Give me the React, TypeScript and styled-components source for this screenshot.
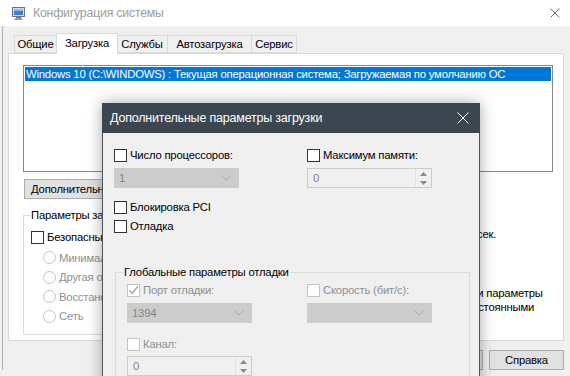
import React from 'react';
import styled, { createGlobalStyle } from 'styled-components';

const GlobalStyle = createGlobalStyle`
  html, body {
    margin: 0;
    padding: 0;
  }
  body {
    background: #f0f0f0;
    font-family: "Liberation Sans", "Noto Sans", sans-serif;
    font-size: 11.3px;
    letter-spacing: -0.2px;
    color: #000;
  }
`;

const Screen = styled.div`
  position: relative;
  width: 570px;
  height: 376px;
  overflow: hidden;
  background: #f0f0f0;
`;

/* ---------- main window ---------- */

const TitleBar = styled.div`
  height: 26px;
  background: #fff;
  display: flex;
  align-items: center;
  padding-left: 12px;
`;

const TitleText = styled.span`
  margin-left: 7px;
  font-size: 12.3px;
  color: #9d9d9d;
  flex: 1;
`;

const CloseBox = styled.div`
  width: 46px;
  height: 26px;
  display: flex;
  align-items: center;
  justify-content: center;
  margin-right: -8px;
`;

const Body = styled.div`
  margin-left: 2px;
  border-left: 1px solid #b0b0b0;
  padding: 7px 6px 0 5px;
`;

const TabStrip = styled.div`
  display: flex;
  align-items: flex-end;
  height: 20px;
  padding-left: 6px;
  position: relative;
  z-index: 1;
`;

const Tab = styled.div<{ $active?: boolean; $width: number }>`
  width: ${(p) => p.$width}px;
  height: ${(p) => (p.$active ? 21 : 18)}px;
  line-height: ${(p) => (p.$active ? 19 : 17)}px;
  text-align: center;
  margin-right: ${(p) => (p.$active ? -1 : 0)}px;
  margin-bottom: ${(p) => (p.$active ? -1 : 0)}px;
  background: ${(p) => (p.$active ? '#fff' : '#f0f0f0')};
  border: 1px solid #d9d9d9;
  border-bottom: ${(p) => (p.$active ? 'none' : '1px solid #d9d9d9')};
  box-sizing: border-box;
  white-space: nowrap;
  position: relative;
  z-index: ${(p) => (p.$active ? 2 : 1)};
  & + & {
    margin-left: -1px;
  }
`;

const Panel = styled.div`
  height: 288px;
  box-sizing: border-box;
  background: #fff;
  border: 1px solid #d9d9d9;
  padding: 11px 10px 0 14px;
`;

const ListBox = styled.div`
  height: 107px;
  box-sizing: border-box;
  border: 1px solid #828790;
  padding: 1px;
`;

const ListItem = styled.div<{ $selected?: boolean }>`
  height: 14px;
  line-height: 14px;
  padding-left: 1px;
  white-space: nowrap;
  background: ${(p) => (p.$selected ? '#0078d7' : 'transparent')};
  color: ${(p) => (p.$selected ? '#fff' : '#000')};
`;

const PushButton = styled.div<{ $width?: number }>`
  height: 20px;
  width: ${(p) => (p.$width ? `${p.$width}px` : 'auto')};
  padding: 0 6px;
  box-sizing: border-box;
  background: #e1e1e1;
  border: 1px solid #adadad;
  line-height: 18px;
  text-align: center;
  white-space: nowrap;
  overflow: hidden;
`;

const AdvancedRow = styled.div`
  display: flex;
  margin-top: 7px;
  margin-left: 1px;
`;

const BootArea = styled.div`
  display: flex;
  margin-top: 9px;
`;

const Group = styled.fieldset<{ $width: number }>`
  width: ${(p) => p.$width}px;
  box-sizing: border-box;
  margin: 0;
  padding: 0 8px 8px 7px;
  border: 1px solid #dcdcdc;
  min-width: 0;
`;

const Legend = styled.legend`
  padding: 0 1px;
  margin-left: -1px;
  line-height: 14px;
  white-space: nowrap;
`;

const BootColumns = styled.div`
  display: flex;
  gap: 20px;
  padding-top: 8px;
`;

const Column = styled.div`
  display: flex;
  flex-direction: column;
`;

const OptionRow = styled.label<{ $indent?: number; $height?: number; $disabled?: boolean }>`
  display: flex;
  align-items: center;
  gap: 3px;
  height: ${(p) => p.$height ?? 14}px;
  padding-left: ${(p) => p.$indent ?? 0}px;
  white-space: nowrap;
  color: ${(p) => (p.$disabled ? '#8f8f8f' : '#000')};
`;

const Box = styled.span<{ $disabled?: boolean }>`
  width: 13px;
  height: 13px;
  box-sizing: border-box;
  flex: none;
  background: #fff;
  border: 1px solid ${(p) => (p.$disabled ? '#c4c4c4' : '#333')};
  display: flex;
  align-items: center;
  justify-content: center;
`;

const Radio = styled.span`
  width: 13px;
  height: 13px;
  box-sizing: border-box;
  flex: none;
  border-radius: 50%;
  background: #fff;
  border: 1px solid #c4c4c4;
`;

const SideColumn = styled.div`
  display: flex;
  flex-direction: column;
  padding-left: 12px;
  line-height: 14px;
`;

const TimeoutRow = styled.div`
  display: flex;
  align-items: center;
  gap: 4px;
  margin-top: 2px;
`;

const TextBox = styled.div<{ $width: number }>`
  width: ${(p) => p.$width}px;
  height: 20px;
  box-sizing: border-box;
  border: 1px solid #7a7a7a;
  background: #fff;
  padding-left: 4px;
  line-height: 18px;
`;

const PersistRow = styled.label`
  display: flex;
  align-items: flex-start;
  gap: 3px;
  margin-top: 42px;
  line-height: 14px;
`;

const BottomButtons = styled.div`
  display: flex;
  justify-content: flex-end;
  gap: 6px;
  padding: 9px 0 0;
`;

/* ---------- dialog ---------- */

const Dialog = styled.div`
  position: absolute;
  left: 102px;
  top: 103px;
  width: 378px;
  height: 300px;
  box-sizing: border-box;
  background: #f0f0f0;
  border: 1px solid #4a545e;
  box-shadow: 0 0 14px rgba(0, 0, 0, 0.35);
`;

const DialogTitle = styled.div`
  height: 30px;
  background: #3c4650;
  color: #fff;
  font-size: 12.5px;
  display: flex;
  align-items: center;
  padding-left: 8px;
  margin: -1px -1px 0 -1px;
`;

const DialogTitleText = styled.span`
  flex: 1;
`;

const DialogClose = styled.div`
  width: 32px;
  display: flex;
  justify-content: center;
  margin-right: 1px;
`;

const DialogBody = styled.div`
  padding: 15px 0 0 11px;
`;

const TwoCols = styled.div<{ $col: number }>`
  display: grid;
  grid-template-columns: ${(p) => p.$col}px 125px;
  row-gap: 6px;
`;

const Combo = styled.div`
  width: 125px;
  height: 20px;
  box-sizing: border-box;
  background: #cccccc;
  border: 1px solid #cccccc;
  display: flex;
  align-items: center;
  padding: 0 7px 0 4px;
  color: #858585;
`;

const ComboValue = styled.span`
  flex: 1;
`;

const Spin = styled.div`
  width: 125px;
  height: 20px;
  box-sizing: border-box;
  border: 1px solid #cccccc;
  background: #f0f0f0;
  display: flex;
  color: #858585;
`;

const SpinValue = styled.span`
  flex: 1;
  padding-left: 5px;
  line-height: 18px;
`;

const SpinButtons = styled.div`
  width: 15px;
  border-left: 1px solid #e2e2e2;
  display: flex;
  flex-direction: column;
  align-items: center;
  justify-content: space-around;
`;

const Stack = styled.div<{ $top: number; $gap: number }>`
  display: flex;
  flex-direction: column;
  gap: ${(p) => p.$gap}px;
  margin-top: ${(p) => p.$top}px;
`;

const DebugGroup = styled.fieldset`
  width: 355px;
  box-sizing: border-box;
  margin: 32px 0 0 1px;
  padding: 4px 0 0 11px;
  border: 1px solid #dcdcdc;
  border-bottom: none;
  min-width: 0;
  height: 140px;
`;

const DebugLegend = styled.legend`
  padding: 0 1px;
  margin-left: -4px;
  line-height: 14px;
`;

/* ---------- icons ---------- */

const AppIcon = () => (
  <svg width="14" height="14" viewBox="0 0 14 14">
    <rect x="0.5" y="1.5" width="12" height="9" fill="#d8dde3" stroke="#6b7480" />
    <rect x="2" y="3" width="9" height="6" fill="#3b7fcf" />
    <rect x="2" y="3" width="9" height="2" fill="#8fbce8" />
    <rect x="4" y="11" width="5" height="1.5" fill="#6b7480" />
    <rect x="2.5" y="12.5" width="8" height="1.5" fill="#8a929c" />
  </svg>
);

const CloseIcon = ({ color, size }: { color: string; size: number }) => (
  <svg width={size} height={size} viewBox={`0 0 ${size} ${size}`}>
    <path d={`M0.5 0.5 L${size - 0.5} ${size - 0.5} M${size - 0.5} 0.5 L0.5 ${size - 0.5}`} stroke={color} strokeWidth="1" />
  </svg>
);

const Chevron = () => (
  <svg width="10" height="6" viewBox="0 0 10 6">
    <path d="M0.5 0.5 L5 5 L9.5 0.5" fill="none" stroke="#a6a6a6" strokeWidth="1" />
  </svg>
);

const Caret = ({ up }: { up?: boolean }) => (
  <svg width="7" height="4" viewBox="0 0 7 4">
    <path d={up ? 'M0 4 L3.5 0 L7 4 Z' : 'M0 0 L3.5 4 L7 0 Z'} fill="#8a8a8a" />
  </svg>
);

const Check = () => (
  <svg width="11" height="11" viewBox="0 0 11 11">
    <path d="M1.5 5.5 L4.2 8.5 L9.8 1.5" fill="none" stroke="#a8a8a8" strokeWidth="1.4" />
  </svg>
);

/* ---------- small parts ---------- */

const CheckOption = ({ label, disabled, checked }: { label: string; disabled?: boolean; checked?: boolean }) => (
  <OptionRow $disabled={disabled}>
    <Box $disabled={disabled}>{checked && <Check />}</Box>
    {label}
  </OptionRow>
);

const SpinBox = ({ value }: { value: string }) => (
  <Spin>
    <SpinValue>{value}</SpinValue>
    <SpinButtons>
      <Caret up />
      <Caret />
    </SpinButtons>
  </Spin>
);

const tabs = [
  { label: 'Общие', width: 43 },
  { label: 'Загрузка', width: 62, active: true },
  { label: 'Службы', width: 52 },
  { label: 'Автозагрузка', width: 85 },
  { label: 'Сервис', width: 46 },
];
const radios = ['Минимальная', 'Другая оболочка', 'Восстановление Active Directory', 'Сеть'];
const extras = ['Без GUI', 'Журнал загрузки', 'Базовое видео', 'Информация об ОС'];

const App: React.FC = () => {
  return (
    <Screen>
      <GlobalStyle />
      <TitleBar>
        <AppIcon />
        <TitleText>Конфигурация системы</TitleText>
        <CloseBox>
          <CloseIcon color="#6f6f6f" size={10} />
        </CloseBox>
      </TitleBar>
      <Body>
        <TabStrip>
          {tabs.map((t) => (
            <Tab key={t.label} $width={t.width} $active={t.active}>
              {t.label}
            </Tab>
          ))}
        </TabStrip>
        <Panel>
          <ListBox>
            <ListItem $selected>
              Windows 10 (C:\WINDOWS) : Текущая операционная система; Загружаемая по умолчанию ОС
            </ListItem>
          </ListBox>
          <AdvancedRow>
            <PushButton>Дополнительные параметры...</PushButton>
          </AdvancedRow>
          <BootArea>
            <Group $width={370}>
              <Legend>Параметры загрузки</Legend>
              <BootColumns>
                <Column>
                  <CheckOption label="Безопасный режим" />
                  {radios.map((r, i) => (
                    <OptionRow key={r} $indent={12} $height={19.5} $disabled style={i === 0 ? { marginTop: 4 } : undefined}>
                      <Radio />
                      {r}
                    </OptionRow>
                  ))}
                </Column>
                <Column>
                  {extras.map((e) => (
                    <OptionRow key={e} $height={19.5}>
                      <Box />
                      {e}
                    </OptionRow>
                  ))}
                </Column>
              </BootColumns>
            </Group>
            <SideColumn>
              <span>Таймаут:</span>
              <TimeoutRow>
                <TextBox $width={68}>30</TextBox>
                <span>сек.</span>
              </TimeoutRow>
              <PersistRow>
                <Box />
                <span>
                  Сделать эти параметры
                  <br />
                  загрузки постоянными
                </span>
              </PersistRow>
            </SideColumn>
          </BootArea>
        </Panel>
        <BottomButtons>
          <PushButton $width={75}>ОК</PushButton>
          <PushButton $width={75}>Отмена</PushButton>
          <PushButton $width={75}>Применить</PushButton>
          <PushButton $width={75}>Справка</PushButton>
        </BottomButtons>
      </Body>

      <Dialog>
        <DialogTitle>
          <DialogTitleText>Дополнительные параметры загрузки</DialogTitleText>
          <DialogClose>
            <CloseIcon color="#ffffff" size={12} />
          </DialogClose>
        </DialogTitle>
        <DialogBody>
          <TwoCols $col={193}>
            <CheckOption label="Число процессоров:" />
            <CheckOption label="Максимум памяти:" />
            <Combo>
              <ComboValue>1</ComboValue>
              <Chevron />
            </Combo>
            <SpinBox value="0" />
          </TwoCols>
          <Stack $top={12} $gap={5}>
            <CheckOption label="Блокировка PCI" />
            <CheckOption label="Отладка" />
          </Stack>
          <DebugGroup>
            <DebugLegend>Глобальные параметры отладки</DebugLegend>
            <TwoCols $col={180}>
              <CheckOption label="Порт отладки:" disabled checked />
              <CheckOption label="Скорость (бит/с):" disabled />
              <Combo>
                <ComboValue>1394</ComboValue>
                <Chevron />
              </Combo>
              <Combo>
                <ComboValue />
                <Chevron />
              </Combo>
            </TwoCols>
            <Stack $top={14} $gap={5}>
              <CheckOption label="Канал:" disabled />
              <SpinBox value="0" />
            </Stack>
          </DebugGroup>
        </DialogBody>
      </Dialog>
    </Screen>
  );
};

export default React.memo(App);
